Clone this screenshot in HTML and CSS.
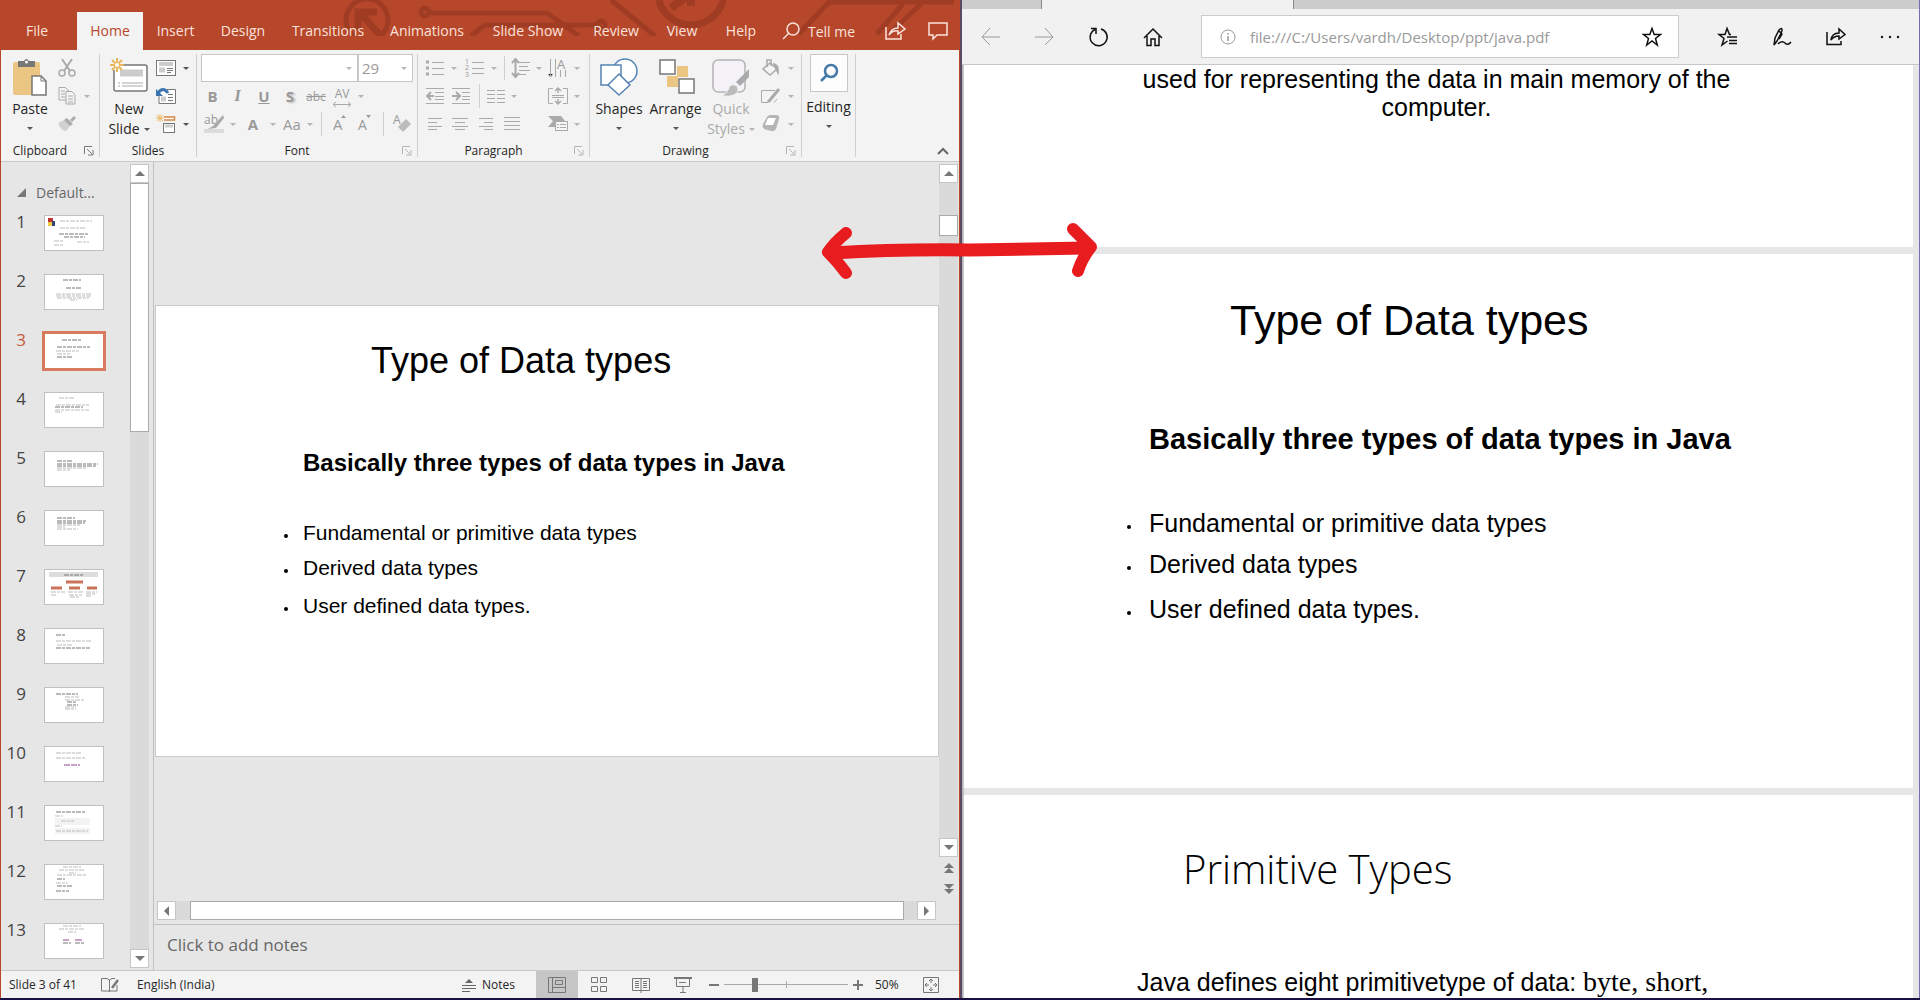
FILE: index.html
```html
<!DOCTYPE html>
<html lang="en">
<head>
<meta charset="utf-8">
<title>Java slides</title>
<link rel="stylesheet" href="styles.css">
</head>
<body>
<div class="desktop">
<section class="ppt" aria-label="Presentation editor">
  <header class="tabs">
    <svg class="circuit" width="958" height="36" fill="none" stroke="#a03c23" stroke-width="5">
      <circle cx="366" cy="20" r="21"/><path d="M378 34L360 14M357 30V12H376" stroke-width="7"/>
      <circle cx="424" cy="12" r="4"/><path d="M430 13H546L578 36M470 36L484 25H600"/><circle cx="600" cy="25" r="4"/><path d="M610 0L654 36"/>
      <circle cx="690" cy="-8" r="33" stroke-width="7"/><path d="M670 8L694-10M690 6V-6" stroke-width="8"/>
      <path d="M798 34L828 2H953M876 34L902 4M888 34L920 4"/>
    </svg>
    <nav class="tablist">
      <button>File</button><button class="on">Home</button><button>Insert</button><button>Design</button><button>Transitions</button><button>Animations</button><button>Slide Show</button><button>Review</button><button>View</button><button>Help</button>
    </nav>
    <button class="tell"><svg width="18" height="18" fill="none" stroke="#fbe3dc" stroke-width="1.500"><circle cx="11" cy="7" r="6"/><path d="M7 11L1 17"/></svg>Tell me</button>
    <span class="grow"></span>
    <button class="headicon" aria-label="Share"><svg width="22" height="20" fill="none" stroke="#fbe3dc" stroke-width="1.5"><path d="M2 6V18H17V13M5 14Q7 7 14 7V2L21 8L14 13V10Q9 9 5 14Z"/></svg></button>
    <button class="headicon" aria-label="Comments"><svg width="20" height="18" fill="none" stroke="#fbe3dc" stroke-width="1.5"><path d="M1 1H19V13H9L5 17V13H1Z"/></svg></button>
  </header>

  <div class="ribbon">
    <section class="group clip">
      <div class="tools clip-tools">
        <button class="big"><svg width="36" height="40"><rect x="1" y="4" width="27" height="33" rx="2" fill="#eac682"/><path d="M6 3H12Q14-1 17 3H23V9H6Z" fill="#777"/><circle cx="14.500" cy="4" r="1.500" fill="#fff"/><path d="M20 18H29L34 23V37H20Z" fill="#fff" stroke="#777" stroke-width="1.500"/><path d="M29 18V23H34" fill="none" stroke="#777"/></svg><span>Paste</span><i class="caret dark"></i></button>
        <div class="rows3 side2">
          <button aria-label="Cut"><svg width="18" height="20" fill="none" stroke="#aaa" stroke-width="1.500"><path d="M4 1L12 13M14 1L6 13" stroke-width="2"/><circle cx="4" cy="15" r="3"/><circle cx="14" cy="15" r="3"/></svg></button><span></span>
          <button aria-label="Copy"><svg width="18" height="20" fill="#f3f3f3" stroke="#aaa"><path d="M1 1.500H7L11 5V14H1Z"/><path d="M8 5.500H14L17 9V18H8Z"/><path d="M3 5H7M3 8H7M3 11H7M10 10H15M10 13H15M10 16H15"/></svg></button><i class="caret"></i>
          <button aria-label="Format painter"><svg width="18" height="16"><path d="M0 7L6 4L12 10L8 15Q3 15 0 7Z" fill="#d2d0d2"/><path d="M6 4L9 2L15 8L12 10ZM12 4L16 0L18 2L14 6Z" fill="#aaa"/></svg></button><span></span>
        </div>
      </div>
      <footer><span>Clipboard</span><svg class="launch on" width="10" height="10"><use href="#launch"/></svg></footer>
    </section>

    <section class="group slides">
      <div class="tools slides-tools">
        <button class="big"><svg width="38" height="36"><rect x="4" y="7" width="33" height="26" rx="2" fill="#fff" stroke="#777" stroke-width="1.500"/><path d="M10 15H33" stroke="#ccc" stroke-width="7"/><path d="M8 25H10M12 25H33M8 28H10M12 28H33" stroke="#aaa"/><circle cx="6.500" cy="6.500" r="6" fill="#f3f3f3"/><path d="M7 0V14M0 7H14M2 2L12 12M12 2L2 12" stroke="#eab65c" stroke-width="2"/><circle cx="7" cy="7" r="2" fill="#fff"/></svg><span>New</span><span class="with-caret">Slide <i class="caret dark"></i></span></button>
        <div class="rows3 side2">
          <button aria-label="Layout"><svg width="20" height="16" fill="#fff" stroke="#777"><rect x=".5" y=".5" width="19" height="15"/><path d="M3 4H17" stroke="#ccc" stroke-width="4"/><path d="M3 10H9" stroke="#ccc" stroke-width="5"/><path d="M11 8.500H17M11 10.500H17M11 12.500H15"/></svg></button><i class="caret dark"></i>
          <button aria-label="Reset"><svg width="20" height="18" fill="#fff" stroke="#777"><path d="M3 7V16.500H19.500V2.500H11"/><path d="M5 12H10" stroke="#ccc" stroke-width="5"/><path d="M12 7.500H17M12 10.500H17M12 13.500H17"/><path d="M2 6Q7-1 12 6" fill="none" stroke="#3b75ae" stroke-width="3"/><path d="M0 2V9H7Z" fill="#3b75ae" stroke="none"/></svg></button><span></span>
          <button aria-label="Section"><svg width="20" height="20" fill="#fff"><path d="M8 3H18.500V6H8" stroke="#d58645" stroke-width="1.500"/><path d="M4 0V8M0 4H8M1 1L7 7M7 1L1 7" stroke="#eab65c"/><rect x="7.500" y="9.500" width="11" height="9" stroke="#777"/><path d="M9 12H17" stroke="#ccc" stroke-width="3"/></svg></button><i class="caret dark"></i>
        </div>
      </div>
      <footer><span>Slides</span></footer>
    </section>

    <section class="group font">
      <div class="tools rows3">
        <div class="pickers">
          <label class="picker"><select aria-label="Font"><option></option></select><i class="caret"></i></label>
          <label class="picker"><select aria-label="Font size"><option>29</option></select><i class="caret"></i></label>
        </div>
        <div class="f2">
          <button><b>B</b></button><button class="ital"><b>I</b></button><button><b><u>U</u></b></button><button class="shade"><b>S</b></button><button class="small"><s>abc</s></button>
          <button class="small av">AV<svg width="18" height="5" stroke="#aaa" fill="none"><path d="M0 2.500H18M3 0L0 2.500L3 5M15 0L18 2.500L15 5"/></svg></button><i class="caret"></i>
        </div>
        <div class="f3">
          <button class="small av" aria-label="Highlight"><svg width="20" height="20"><text x="0" y="10" class="glyph" font-size="12">ab</text><path d="M0 15H20V19H0Z" fill="#dcdbdc"/><path d="M19 1L9 12L4 15L12 14L20 4Z" fill="#aaa"/></svg></button><i class="caret"></i><button><b>A</b></button><i class="caret"></i><button>Aa</button><i class="caret"></i><i class="sep"></i>
          <button aria-label="Grow font"><svg width="14" height="20"><text x="0" y="16" class="glyph" font-size="15">A</text><path d="M8 4L10.500 1L13 4Z" fill="#999"/></svg></button>
          <button aria-label="Shrink font"><svg width="14" height="20"><text x="0" y="16" class="glyph" font-size="14">A</text><path d="M8 1L10.500 4L13 1Z" fill="#999"/></svg></button><i class="sep"></i>
          <button aria-label="Clear formatting"><svg width="18" height="20"><text x="0" y="10" class="glyph" font-size="12">A</text><path d="M5 13L13 5L18 10L10 18Z" fill="#bbb"/></svg></button>
        </div>
      </div>
      <footer><span>Font</span><svg class="launch" width="10" height="10"><use href="#launch"/></svg></footer>
    </section>

    <section class="group para">
      <div class="tools rows3">
        <div class="p1">
          <button aria-label="Bullets"><svg width="18" height="18" stroke="#aaa"><path d="M6 3.500H18M6 9.500H18M6 15.500H18"/><path d="M0 3H3M0 9H3M0 15H3" stroke-width="3"/></svg></button><i class="caret"></i>
          <button aria-label="Numbering"><svg width="20" height="20" stroke="#aaa"><path d="M7 4.500H19M7 10.500H19M7 15.500H19"/><g class="glyph" stroke="none" font-size="7"><text x="0" y="6">1</text><text x="0" y="12">2</text><text x="0" y="19">3</text></g></svg></button><i class="caret"></i><i class="sep"></i>
          <button aria-label="Line spacing"><svg width="18" height="20" stroke="#aaa"><path d="M7 4.500H18M7 8.500H16M7 12.500H18M7 16.500H14"/><path d="M3.500 2V18M0 5L3.500 1L7 5M0 15L3.500 19L7 15" stroke-width="2" fill="none"/></svg></button><i class="caret"></i>
          <button aria-label="Text direction"><svg width="20" height="20" stroke="#aaa"><path d="M2.500 1V19M7.500 1V19M12.500 12V19M17.500 12V19M0 16L2.500 19L5 16"/><text x="9" y="11" class="glyph" stroke="none" font-size="13">A</text></svg></button><i class="caret"></i>
        </div>
        <div class="p2">
          <button aria-label="Decrease indent"><svg width="18" height="16" stroke="#aaa"><path d="M0 .5H18M9 4.500H18M9 8.500H18M9 11.500H18M0 15.500H18"/><path d="M1 8H8M5 4L1 8L5 12" stroke-width="2" fill="none"/></svg></button>
          <button aria-label="Increase indent"><svg width="18" height="16" stroke="#aaa"><path d="M0 .5H18M10 4.500H18M10 8.500H18M10 11.500H18M0 15.500H18"/><path d="M0 8H7M4 4L8 8L4 12" stroke-width="2" fill="none"/></svg></button><i class="sep"></i>
          <button aria-label="Columns"><svg width="18" height="14" stroke="#aaa"><path d="M0 1.500H8M10 1.500H18M0 5.500H8M10 5.500H18M0 9.500H8M10 9.500H18M0 13.500H8M10 13.500H18"/></svg></button><i class="caret"></i><span></span>
          <button aria-label="Align text"><svg width="20" height="18" stroke="#aaa" fill="none"><path d="M5 1.500H.5V16.500H5M15 1.500H19.500V16.500H15M4 8.500H16M4 10.500H16" /><path d="M10 1V6M7 4L10 1L13 4M10 12V17M7 14L10 17L13 14" stroke-width="1.500"/></svg></button><i class="caret"></i>
        </div>
        <div class="p3">
          <button aria-label="Align left"><svg width="16" height="12" stroke="#aaa"><path d="M1 .5H15M1 4.500H10M1 8.500H15M1 11.500H10"/></svg></button>
          <button aria-label="Center"><svg width="16" height="12" stroke="#aaa"><path d="M0 .5H16M3 4.500H13M0 8.500H16M3 11.500H13"/></svg></button>
          <button aria-label="Align right"><svg width="16" height="12" stroke="#aaa"><path d="M1 .5H15M6 4.500H15M1 8.500H15M6 11.500H15"/></svg></button>
          <button aria-label="Justify"><svg width="16" height="14" stroke="#aaa"><path d="M0 .5H16M0 4.500H16M0 8.500H16M0 12.500H16"/></svg></button><span></span>
          <button aria-label="SmartArt"><svg width="20" height="16"><path d="M0 0H13L17 5H7V11H0L5 5Z" fill="#aaa"/><rect x="7.500" y="5.500" width="12" height="9" fill="#f8f5f8" stroke="#aaa"/><path d="M9 8.500H11M12 8.500H18M9 11.500H11M12 11.500H18" stroke="#aaa"/></svg></button><i class="caret"></i>
        </div>
      </div>
      <footer><span>Paragraph</span><svg class="launch" width="10" height="10"><use href="#launch"/></svg></footer>
    </section>

    <section class="group draw">
      <div class="tools draw-tools">
        <button class="big"><svg width="38" height="38" fill="#fff" stroke="#5684b5" stroke-width="1.500"><circle cx="25" cy="13" r="12"/><rect x="1" y="7" width="20" height="20"/><path d="M19 16L30 27L19 37L8 27Z"/></svg><span>Shapes</span><i class="caret dark"></i></button>
        <button class="big"><svg width="38" height="38"><path d="M20 8H31V19H20ZM10 18H21V29H10Z" fill="#eac682"/><g fill="#fff" stroke="#777" stroke-width="1.500"><rect x="3" y="2" width="15" height="14"/><rect x="22" y="21" width="15" height="14"/></g></svg><span>Arrange</span><i class="caret dark"></i></button>
        <button class="big dim"><svg width="38" height="38"><rect x="1" y="2" width="32" height="32" rx="5" fill="#f5f2f7" stroke="#b5b3b5" stroke-width="1.500"/><path d="M37 11L24 24L28 28L37 19Z" fill="#aaa"/><path d="M10 38Q17 33 17 29Q20 25 25 28Q28 34 22 37Q17 39 10 38Z" fill="#bbb" stroke="#f3f3f3"/></svg><span>Quick</span><span class="with-caret">Styles <i class="caret"></i></span></button>
        <div class="rows3 side2">
          <button aria-label="Shape fill"><svg width="18" height="18" fill="#f5f3f5" stroke="#aaa" stroke-width="1.500"><path d="M8 4L15 10L8 16L1 10Z"/><path d="M5 8V1H9V7" fill="none"/><path d="M12 5Q17 6 16 14L14 10Z" fill="#aaa"/></svg></button><i class="caret"></i>
          <button aria-label="Shape outline"><svg width="20" height="16" fill="none" stroke="#aaa"><path d="M14 2.500H.5V14.500H7M13 14.500L16 11"/><path d="M18 1L9 12L7 14" stroke-width="3"/></svg></button><i class="caret"></i>
          <button aria-label="Shape effects"><svg width="18" height="18"><path d="M5 2Q6 0 9 0H15Q18 1 17 4L14 14Q12 17 9 16L2 14Q0 12 1 9Z" fill="#b5b5b5"/><path d="M6 3H14L11 10H3Z" fill="#fff"/></svg></button><i class="caret"></i>
        </div>
      </div>
      <footer><span>Drawing</span><svg class="launch" width="10" height="10"><use href="#launch"/></svg></footer>
    </section>

    <section class="group edit">
      <button class="big"><span class="findbox"><svg width="20" height="20" fill="none" stroke="#4679a8" stroke-width="2.500"><circle cx="12" cy="8" r="6"/><path d="M8 12L2 18"/></svg></span><span>Editing</span><i class="caret dark"></i></button>
    </section>
    <button class="collapse" aria-label="Collapse the ribbon"><svg width="12" height="8" fill="none" stroke="#666" stroke-width="2"><path d="M1 7L6 2L11 7"/></svg></button>
  </div>

  <div class="work">
    <aside class="outline">
      <h2><svg width="9" height="9"><path d="M9 0V9H0Z" fill="#777"/></svg>Default...</h2>
      <ol>
        <li><span>1</span><svg class="thumb" viewBox="0 0 58 34"><path d="M3 2H8V6H3Z" fill="#b33"/><path d="M3 6H7V10H3Z" fill="#ec4"/><path d="M7 5H10V10H7Z" fill="#347"/><path class="t" d="M15 5H47M15 12H40M9 25H18M32 26H44M9 29H19"/><path class="t d" d="M14 18H44M19 21H40"/></svg></li>
        <li><span>2</span><svg class="thumb" viewBox="0 0 58 34"><path class="t d" d="M18 5H36M21 13H37"/><path class="t" d="M11 19H46M11 21H47M12 23H44M25 25H32"/></svg></li>
        <li class="cur"><span>3</span><svg class="thumb" viewBox="0 0 58 34"><path class="t d" d="M17 6H37M12 13H45"/><path class="t" d="M11 17H34M12 20H25"/><path class="t d" d="M12 23H28"/></svg></li>
        <li><span>4</span><svg class="thumb" viewBox="0 0 58 34"><path class="t" d="M14 5H30M11 12H44M10 17H44M10 19H17"/><path class="t d" d="M10 14H38"/></svg></li>
        <li><span>5</span><svg class="thumb" viewBox="0 0 58 34"><path class="t d" d="M12 9H27M12 12H53M12 14H51"/><path class="t" d="M12 16H41M12 18H25"/></svg></li>
        <li><span>6</span><svg class="thumb" viewBox="0 0 58 34"><path class="t d" d="M12 7H30M12 10H41M12 12H40"/><path class="t" d="M12 14H35M12 16H20M12 18H33"/></svg></li>
        <li><span>7</span><svg class="thumb" viewBox="0 0 58 34"><path d="M4 2H53V7H4Z" fill="#ddd"/><path class="t d" d="M19 5H38"/><path d="M21 12H38" stroke="#c97358" stroke-width="3"/><path d="M6 18H17M24 18H35M42 18H52" stroke="#c97358" stroke-width="3"/><path class="t" d="M6 22H20M6 25H12M23 22H38M24 25H37M25 27H35M41 22H52M41 24H51M41 26H46"/></svg></li>
        <li><span>8</span><svg class="thumb" viewBox="0 0 58 34"><path class="t d" d="M11 6H21M11 19H45"/><path class="t" d="M11 12H47M12 16H28"/></svg></li>
        <li><span>9</span><svg class="thumb" viewBox="0 0 58 34"><path class="t d" d="M11 6H33M22 14H32M22 17H33"/><path class="t" d="M20 9H34M20 12H39M20 19H31M20 21H31"/></svg></li>
        <li><span>10</span><svg class="thumb" viewBox="0 0 58 34"><path class="t" d="M11 6H36M11 11H41"/><path d="M19 18H35" stroke="#8d4391" stroke-dasharray="6 1"/></svg></li>
        <li><span>11</span><svg class="thumb" viewBox="0 0 58 34"><path d="M10 12H45V19H10ZM10 22H45V28H10Z" fill="#f3f3f3"/><path class="t d" d="M11 6H40"/><path class="t" d="M10 10H18M16 15H29M10 20H17M11 25H43"/></svg></li>
        <li><span>12</span><svg class="thumb" viewBox="0 0 58 34"><path class="t" d="M18 2H36M14 5H39M24 8H31M12 10H42M11 18H23"/><path class="t d" d="M12 14H20M12 21H28M11 26H24"/></svg></li>
        <li><span>13</span><svg class="thumb" viewBox="0 0 58 34"><path class="t" d="M18 2H36M14 5H39M23 8H31"/><path d="M18 16H24M30 16H37" stroke="#8d4391"/><path class="t d" d="M18 19H26M30 19H39"/></svg></li>
      </ol>
    </aside>
    <div class="vbar side"><button aria-label="Scroll up"><i class="up"></i></button><div class="handle"></div><span class="grow"></span><button aria-label="Scroll down"><i class="down"></i></button></div>

    <main class="editor">
      <div class="stage">
        <div class="canvas">
          <article class="slide">
            <h1>Type of Data types</h1>
            <h3>Basically three types of data types in Java</h3>
            <ul><li>Fundamental or primitive data types</li><li>Derived data types</li><li>User defined data types.</li></ul>
          </article>
          <div class="hbar"><button aria-label="Scroll left"><i class="left"></i></button><div class="handle"></div><button aria-label="Scroll right"><i class="right"></i></button></div>
        </div>
        <div class="vcol">
          <div class="vbar main"><button aria-label="Scroll up"><i class="up"></i></button><div class="handle"></div><span class="grow"></span><button aria-label="Scroll down"><i class="down"></i></button></div>
          <button class="jump" aria-label="Previous slide"><i class="up"></i><i class="up"></i></button>
          <button class="jump" aria-label="Next slide"><i class="down"></i><i class="down"></i></button>
        </div>
      </div>
      <textarea class="notes" aria-label="Notes" placeholder="Click to add notes"></textarea>
    </main>
  </div>

  <footer class="status">
    <span>Slide 3 of 41</span>
    <svg width="18" height="16" fill="none" stroke="#777"><path d="M8.500 15V3L6 1.500H.5V14H8.500ZM8.500 3L11 1.500H14M8.500 14H16V8"/><path d="M17 3L11 11" stroke-width="2.500"/></svg>
    <span>English (India)</span>
    <span class="grow"></span>
    <button class="notesbtn"><svg width="14" height="14" stroke="#666"><path d="M3 5L7 1L11 5Z" fill="#666" stroke="none"/><path d="M0 7.500H14M0 10.500H14M0 13.500H8"/></svg>Notes</button>
    <div class="views">
      <button class="on" aria-label="Normal"><svg width="18" height="16" fill="none" stroke="#777"><path d="M.5.5H17.500V15.500H.5ZM4.500.5V15.500M4.500 10.500H17.500M7.500 3.500H14.500V7.500H7.500Z"/></svg></button>
      <button aria-label="Slide sorter"><svg width="18" height="16" fill="none" stroke="#777"><path d="M1.500.5H7.500V5.500H1.500ZM10.500.5H16.500V5.500H10.500ZM1.500 9.500H7.500V14.500H1.500ZM10.500 9.500H16.500V14.500H10.500Z"/></svg></button>
      <button aria-label="Reading view"><svg width="18" height="16" fill="none" stroke="#777"><path d="M.5 1.500H17.500V13.500H.5ZM9 2V16M3 4.500H7M3 6.500H7M3 8.500H7M3 10.500H7M11 4.500H15M11 6.500H15M11 8.500H15M11 10.500H15"/></svg></button>
      <button aria-label="Slide show"><svg width="18" height="16" fill="none" stroke="#777"><path d="M0 1H18" stroke-width="2"/><path d="M2.500 2V9.500H15.500V2M5 5.500H12M9 10V15M6 15.500H12"/></svg></button>
    </div>
    <button class="zm" aria-label="Zoom out"><svg width="10" height="10"><path d="M0 5H10" stroke="#777" stroke-width="2"/></svg></button>
    <input type="range" aria-label="Zoom" min="0" max="100" value="24">
    <button class="zm" aria-label="Zoom in"><svg width="10" height="10"><path d="M0 5H10M5 0V10" stroke="#777" stroke-width="2"/></svg></button>
    <span class="pct">50%</span>
    <button class="zm fit" aria-label="Fit slide"><svg width="16" height="16" fill="none" stroke="#777"><path d="M.5.5H15.500V15.500H.5ZM8 2V6M8 10V14M2 8H6M10 8H14M6 4L8 2L10 4M6 12L8 14L10 12M4 6L2 8L4 10M12 6L14 8L12 10"/></svg></button>
  </footer>
</section>

<section class="edge" aria-label="Browser">
  <div class="strip"><div class="tab"></div></div>
  <header class="bar">
    <button aria-label="Back"><svg width="20" height="20" fill="none" stroke="#999"><path d="M19 10H1M9 1L1 10L9 18"/></svg></button>
    <button aria-label="Forward"><svg width="20" height="20" fill="none" stroke="#999"><path d="M0 10H18M10 1L18 10L10 18"/></svg></button>
    <button aria-label="Refresh"><svg width="20" height="20" fill="none" stroke="#111" stroke-width="1.500"><path d="M6 2.500A8.500 8.500 0 1 0 12 2M2 1.500H7V7"/></svg></button>
    <button aria-label="Home"><svg width="20" height="20" fill="none" stroke="#111" stroke-width="1.500"><path d="M1 11L10 2L19 11M4 9V18.500H8V12H12V18.500H16V9"/></svg></button>
    <div class="address">
      <svg width="16" height="16" fill="none" stroke="#999"><circle cx="8" cy="8" r="7"/><path d="M8 7V12M8 4V5.500" stroke-width="1.500"/></svg>
      <input type="text" aria-label="Address" value="file:///C:/Users/vardh/Desktop/ppt/java.pdf">
      <button aria-label="Add to favourites"><svg width="20" height="20" fill="none" stroke="#111" stroke-width="1.500"><path d="M10 1.500L12.200 7.500H18.500L13.500 11.500L15.300 18L10 14L4.700 18L6.500 11.500L1.500 7.500H7.800Z"/></svg></button>
    </div>
    <span class="grow"></span>
    <button aria-label="Favourites"><svg width="20" height="20" fill="none" stroke="#111" stroke-width="1.500"><path d="M13 7.500H11.500L9 1.500L7 7.500H1L6 11.500L4 18L9.500 14M9 10H19M11 13.500H19M11 16.500H19"/></svg></button>
    <button aria-label="Add notes"><svg width="20" height="20" fill="none" stroke="#111" stroke-width="1.500"><path d="M2 18L3 11L7 3Q10 0 10 3Q10 5 5 14ZM7 4L10 7L7 12M6 17Q10 13 13 16T19 15"/></svg></button>
    <button aria-label="Share"><svg width="20" height="20" fill="none" stroke="#111" stroke-width="1.500"><path d="M1 5V17.500H15V14M5 13Q6 6 13 6V2L19 7.500L13 12V9Q8 9 5 13Z"/></svg></button>
    <button aria-label="More"><svg width="20" height="20" fill="#111"><circle cx="2" cy="10" r="1.200"/><circle cx="10" cy="10" r="1.200"/><circle cx="18" cy="10" r="1.200"/></svg></button>
  </header>
  <div class="pdf">
    <article class="page first"><p>used for representing the data in main memory of the<br>computer.</p></article>
    <article class="page second">
      <h1>Type of Data types</h1>
      <h3>Basically three types of data types in Java</h3>
      <ul><li>Fundamental or primitive data types</li><li>Derived data types</li><li>User defined data types.</li></ul>
    </article>
    <article class="page third"><h2>Primitive Types</h2><p>Java defines eight primitivetype of data: <span>byte, short,</span></p></article>
  </div>
</section>
<svg class="arrow" width="280" height="64" viewBox="0 0 280 64" fill="none" stroke="#e81c1e" stroke-linecap="round" stroke-linejoin="round"><path d="M12 33Q80 29 150 30L266 28" stroke-width="13"/><path d="M26 13Q14 23 8 32Q18 42 26 53M253 9L271 27Q262 38 258 51" stroke-width="12"/></svg>
</div>
<svg class="defs" width="0" height="0"><symbol id="launch" viewBox="0 0 10 10"><path d="M.5 8V.5H8M3 3L8 8M9 4V9H4" fill="none" stroke="currentColor"/></symbol></svg>
</body>
</html>
```
FILE: styles.css
```css
* { box-sizing: border-box; }
body { margin: 0; font-family: "Open Sans", "Noto Sans", sans-serif; color: #262626; }
button { border: 0; padding: 0; margin: 0; background: none; font: inherit; color: inherit; display: flex; align-items: center; justify-content: center; }
svg { display: block; flex: none; overflow: visible; }
h1, h2, h3, p, ul, ol { margin: 0; padding: 0; font-weight: 400; }
ul, ol { list-style: none; }
.defs { position: absolute; }
.grow { flex: 1; }
.desktop { position: relative; display: grid; grid-template-columns: 1fr 1fr; height: 100vh; overflow: hidden; border-bottom: 2px solid #1a1044; }

/* presentation window */
.ppt { display: flex; flex-direction: column; min-width: 0; min-height: 0; border-left: 1px solid #b7472a; border-right: 1px solid #b7472a; background: #e6e6e6; }
.tabs { position: relative; display: flex; height: 50px; background: #b7472a; color: #fbe3dc; font-size: 14px; padding-top: 12px; }
.circuit { position: absolute; left: 0; top: 0; overflow: hidden; }
.tablist, .tell, .headicon { position: relative; }
.tablist { display: grid; grid-template-columns: 76px 66px 65px 70px 100px 98px 104px 72px 60px 58px; }
.tablist button { padding-bottom: 2px; }
.tablist button:first-child { padding-right: 4px; }
.tablist .on { background: #f3f3f3; color: #b7472a; }
.tell { gap: 8px; padding-left: 12px; }
.headicon { width: 43px; }
.ribbon { display: flex; height: 112px; background: #f3f3f3; border-bottom: 1px solid #c9c9c9; padding-top: 4px; }
.group { display: flex; flex-direction: column; height: 103px; border-right: 1px solid #d0d0d0; }
.clip { width: 99px; }
.slides { width: 97px; }
.font { width: 221px; }
.para { width: 172px; }
.draw { width: 212px; }
.edit { width: 54px; }
.tools { height: 84px; }
.group footer { display: grid; grid-template-columns: 1fr 20px; align-items: center; height: 16px; line-height: 16px; margin-top: 5px; font-size: 12px; }
.group footer span { text-align: center; }
.slides footer { grid-template-columns: 1fr; }
.launch { color: #b5b5b5; justify-self: center; }
.launch.on { color: #777; }
.rows3 { display: grid; grid-template-rows: 28px 28px 28px; }
.side2 { grid-template-columns: 24px 16px; align-items: center; justify-items: center; }
.clip-tools { display: grid; grid-template-columns: 54px 42px; }
.slides-tools { display: grid; grid-template-columns: 54px 41px; }
.clip .big, .slides .big { padding-left: 4px; }
.big { flex-direction: column; justify-content: flex-start; font-size: 14px; line-height: 20px; gap: 0; }
.big > svg { height: 40px; margin: 4px 0 1px; }
.big > .caret { margin-top: 8px; }
.with-caret { display: flex; align-items: center; gap: 4px; }
.dim { color: #aaa; }
.caret { width: 0; height: 0; align-self: center; justify-self: center; border: 3px solid transparent; border-top-color: #b5b5b5; border-bottom: 0; }
.caret.dark { border-top-color: #555; }
.sep { width: 1px; height: 24px; background: #d0d0d0; align-self: center; justify-self: center; }
.glyph { fill: #999; font-family: "Open Sans", sans-serif; }
.font .tools { padding-left: 4px; color: #999; font-size: 15px; }
.pickers { display: grid; grid-template-columns: 157px 55px; }
.picker { display: grid; grid-template-columns: 1fr 16px; border: 1px solid #c6c6c6; background: #fff; }
.picker select { grid-row: 1; grid-column: 1 / 3; appearance: none; border: 0; background: none; color: #999; font: inherit; padding: 0 3px; }
.picker .caret { grid-row: 1; grid-column: 2; }
.f2, .f3, .p1, .p2, .p3 { display: grid; }
.f2 { grid-template-columns: 23px 27px 26px 26px 26px 26px 12px; }
.f3 { grid-template-columns: 26px 12px 28px 12px 26px 10px 12px 26px 24px 12px 26px; }
.ital { font-family: "Liberation Serif", serif; font-style: italic; font-size: 17px; }
.shade { text-shadow: 2px 1px 2px #bbb; }
.small { font-size: 12px; }
.av { flex-direction: column; line-height: 16px; }
.para .tools { padding-left: 5px; }
.p1 { grid-template-columns: 24px 14px 28px 10px 10px 24px 12px 26px 12px; }
.p2 { grid-template-columns: 24px 28px 8px 26px 10px 26px 26px 12px; }
.p3 { grid-template-columns: 24px 26px 26px 26px 20px 26px 12px; }
.draw-tools { display: grid; grid-template-columns: 58px 55px 56px 40px; }
.findbox { display: grid; place-items: center; width: 38px; height: 38px; margin-bottom: 5px; border: 1px solid #c6c6c6; background: #fdfdfd; }
.collapse { margin: auto 10px 6px auto; }

.work { flex: 1; display: flex; min-height: 0; }
.outline { width: 129px; overflow: hidden; padding-top: 19px; }
.outline h2 { display: flex; align-items: center; gap: 10px; padding-left: 16px; height: 22px; font-size: 14px; color: #666; }
.outline ol { display: grid; gap: 22px; padding-top: 12px; }
.outline li { display: grid; grid-template-columns: 25px 60px; gap: 18px; height: 37px; color: #444; font-size: 17px; line-height: 14px; text-align: right; }
.outline .cur { color: #c8583a; }
.thumb { width: 60px; height: 36px; background: #fff; border: 1px solid #c0c0c0; }
.cur .thumb { border-color: #fff; outline: 3px solid #d9795d; outline-offset: -1px; }
.thumb .t { fill: none; stroke: #bbb; stroke-dasharray: 5 1 3 1; }
.thumb .d { stroke: #777; }
.vbar { display: flex; flex-direction: column; width: 19px; background: #dadada; }
.vbar button, .hbar button { width: 19px; height: 19px; border: 1px solid #c6c6c6; background: #fff; }
.handle { background: #fff; border: 1px solid #aaa; }
.side { margin: 2px 0 2px; }
.side .handle { height: 249px; }
.up, .down, .left, .right { width: 0; height: 0; border: 5px solid transparent; }
.up { border-top: 0; border-bottom-color: #777; }
.down { border-bottom: 0; border-top-color: #777; }
.left { border-left: 0; border-right-color: #777; }
.right { border-right: 0; border-left-color: #777; }
.editor { flex: 1; min-width: 0; display: flex; flex-direction: column; margin-left: 4px; border-left: 1px solid #c0c0c0; }
.stage { flex: 1; display: flex; min-height: 0; }
.canvas { flex: 1; display: flex; flex-direction: column; min-width: 0; padding: 143px 0 4px 1px; }
.slide { height: 452px; background: #fff; border: 1px solid #c9c9c9; color: #000; font-family: "Liberation Sans", Arial, sans-serif; padding-left: 147px; }
.slide h1 { font-size: 36px; line-height: 40px; padding: 35px 0 0 68px; }
.slide h3 { font-size: 24px; line-height: 28px; font-weight: 700; margin-top: 68px; }
.slide ul { font-size: 21px; padding-top: 39px; display: grid; grid-template-rows: 34px 36px 40px; }
.slide li, .second li { display: flex; align-items: center; }
.slide li::before, .second li::before { content: ""; width: 4px; height: 4px; margin: 6px 15px 0 -19px; border-radius: 2px; background: #000; }
.second li::before { margin: 8px 18px 0 -22px; }
.hbar { display: flex; height: 19px; margin: auto 3px 0 2px; background: #dadada; }
.hbar .handle { flex: 1; margin: 0 13px 0 14px; }
.vcol { width: 19px; display: flex; flex-direction: column; padding: 2px 0 25px; margin-right: 1px; }
.main { flex: 1; }
.main .handle { margin-top: 32px; height: 21px; }
.jump { flex-direction: column; height: 21px; }
.notes { height: 46px; border: 0; border-top: 1px solid #c0c0c0; background: none; resize: none; padding: 9px 13px; font: inherit; font-size: 17px; line-height: 22px; }
.notes::placeholder { color: #666; opacity: 1; }
.status { display: flex; align-items: center; height: 28px; padding-left: 8px; background: #f3f3f3; border-top: 1px solid #c9c9c9; font-size: 12px; }
.status > svg { margin: 0 18px 0 24px; }
.notesbtn { gap: 6px; margin-right: 21px; }
.views { display: grid; grid-template-columns: repeat(4, 42px); align-self: stretch; }
.views .on { background: #c6c6c6; }
.zm { width: 20px; }
.status input { width: 124px; height: 16px; margin: 0; appearance: none; background: linear-gradient(#aaa, #aaa) center / 100% 1px no-repeat, linear-gradient(#aaa, #aaa) center / 1px 7px no-repeat; }
.status input::-webkit-slider-thumb { appearance: none; width: 6px; height: 14px; background: #777; }
.pct { width: 53px; padding-left: 7px; }
.fit { margin-right: 18px; }

/* browser window */
.edge { display: flex; flex-direction: column; min-width: 0; min-height: 0; border-left: 2px solid #5b4a63; border-right: 1px solid #7470b0; background: #e6e6e6; overflow: hidden; }
.strip { height: 9px; background: #ccc; padding-left: 79px; }
.tab { width: 253px; height: 9px; background: #f1f1f1; border: solid #888; border-width: 0 1px; }
.bar { display: flex; align-items: center; height: 56px; padding: 0 2px; background: #f1f1f1; border-bottom: 1px solid #c6c6c6; }
.bar > button { width: 54px; height: 54px; }
.address { display: flex; align-items: center; width: 478px; height: 43px; margin-left: 21px; padding: 0 16px 0 18px; background: #fff; border: 1px solid #ccc; }
.address input { flex: 1; min-width: 0; border: 0; padding: 0 14px; background: none; color: #999; font: inherit; font-size: 15px; }
.pdf { flex: 1; min-height: 0; overflow: hidden; display: grid; grid-template-rows: 182px 534px 220px; gap: 7px; padding: 0 6px 0 2px; background: linear-gradient(90deg, #a9a9b0, #e6e6e6 3px); color: #000; font-family: "Liberation Sans", Arial, sans-serif; }
.page { background: #fff; }
.first { font-size: 25px; line-height: 28px; text-align: center; padding-right: 4px; }
.second { padding-left: 185px; }
.second h1 { font-size: 43px; line-height: 48px; padding: 42px 0 0 81px; }
.second h3 { font-size: 29px; line-height: 32px; font-weight: 700; margin-top: 79px; white-space: nowrap; }
.second ul { font-size: 25px; padding-top: 48px; display: grid; grid-template-rows: 40px 42px 48px; }
.third { padding-left: 173px; }
.third h2 { font-family: "Open Sans", sans-serif; font-weight: 300; font-size: 40px; line-height: 48px; padding: 50px 0 0 46px; }
.third p { font-size: 25px; line-height: 32px; margin-top: 73px; white-space: nowrap; }
.third span { font-family: "Liberation Serif", serif; font-size: 28px; }
.arrow { position: absolute; top: 220px; left: calc(50% - 140px); }
```
